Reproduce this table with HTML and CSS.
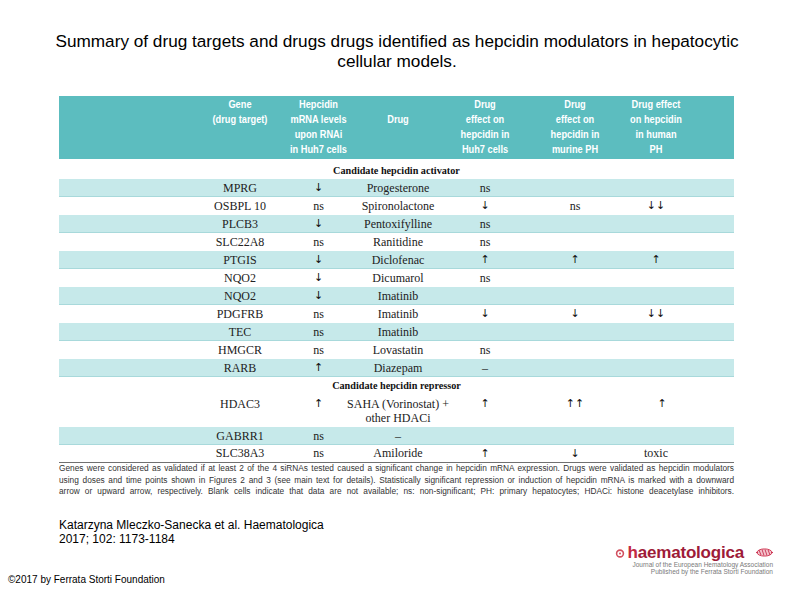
FILE: index.html
```html
<!DOCTYPE html>
<html lang="en">
<head>
<meta charset="utf-8">
<title>Summary of drug targets</title>
<link rel="stylesheet" href="styles.css">
</head>
<body>
<h1 class="title">Summary of drug targets and drugs drugs identified as hepcidin modulators in hepatocytic<br>cellular models.</h1>

<div class="figure">
  <div class="thead">
    <div class="th">Gene<br>(drug target)</div>
    <div class="th">Hepcidin<br>mRNA levels<br>upon RNAi<br>in Huh7 cells</div>
    <div class="th mid">Drug</div>
    <div class="th">Drug<br>effect on<br>hepcidin in<br>Huh7 cells</div>
    <div class="th">Drug<br>effect on<br>hepcidin in<br>murine PH</div>
    <div class="th">Drug effect<br>on hepcidin<br>in human<br>PH</div>
  </div>

  <div class="section s1">Candidate hepcidin activator</div>

  <div class="row alt"><span>MPRG</span><span class="ar">↓</span><span>Progesterone</span><span>ns</span><span></span><span></span></div>
  <div class="row"><span>OSBPL 10</span><span>ns</span><span>Spironolactone</span><span class="ar">↓</span><span>ns</span><span class="ar">↓↓</span></div>
  <div class="row alt"><span>PLCB3</span><span class="ar">↓</span><span>Pentoxifylline</span><span>ns</span><span></span><span></span></div>
  <div class="row"><span>SLC22A8</span><span>ns</span><span>Ranitidine</span><span>ns</span><span></span><span></span></div>
  <div class="row alt"><span>PTGIS</span><span class="ar">↓</span><span>Diclofenac</span><span class="ar">↑</span><span class="ar">↑</span><span class="ar">↑</span></div>
  <div class="row"><span>NQO2</span><span class="ar">↓</span><span>Dicumarol</span><span>ns</span><span></span><span></span></div>
  <div class="row alt"><span>NQO2</span><span class="ar">↓</span><span>Imatinib</span><span></span><span></span><span></span></div>
  <div class="row"><span>PDGFRB</span><span>ns</span><span>Imatinib</span><span class="ar">↓</span><span class="ar">↓</span><span class="ar">↓↓</span></div>
  <div class="row alt"><span>TEC</span><span>ns</span><span>Imatinib</span><span></span><span></span><span></span></div>
  <div class="row"><span>HMGCR</span><span>ns</span><span>Lovastatin</span><span>ns</span><span></span><span></span></div>
  <div class="row alt"><span>RARB</span><span class="ar">↑</span><span>Diazepam</span><span>–</span><span></span><span></span></div>

  <div class="section s2">Candidate hepcidin repressor</div>

  <div class="row tall"><span>HDAC3</span><span class="ar">↑</span><span class="two">SAHA (Vorinostat) +<br>other HDACi</span><span class="ar">↑</span><span class="ar">↑↑</span><span class="ar hum">↑</span></div>
  <div class="row alt"><span>GABRR1</span><span>ns</span><span>–</span><span></span><span></span><span></span></div>
  <div class="row last"><span>SLC38A3</span><span>ns</span><span>Amiloride</span><span class="ar">↑</span><span class="ar">↓</span><span>toxic</span></div>

  <div class="note">
    <span>Genes were considered as validated if at least 2 of the 4 siRNAs tested caused a significant change in hepcidin mRNA expression.  Drugs were validated as hepcidin modulators</span>
    <span>using doses and time points shown in Figures 2 and 3 (see main text for details). Statistically significant repression or induction of hepcidin mRNA is marked with a downward</span>
    <span>arrow  or upward arrow, respectively. Blank cells indicate that data are not available; ns: non-significant;  PH: primary hepatocytes; HDACi: histone deacetylase inhibitors.</span>
  </div>
</div>

<div class="footer">
  <div class="left">
    <p class="cite">Katarzyna Mleczko-Sanecka et al. Haematologica<br>2017; 102: 1173-1184</p>
    <p class="copy">©2017 by Ferrata Storti Foundation</p>
  </div>
  <div class="logo">
    <div class="logo-top">
      <svg class="mark" width="10" height="10" viewBox="0 0 10 10" aria-hidden="true">
        <circle cx="5" cy="5.5" r="3.4" fill="none" stroke="#d2505f" stroke-width="1.6"/>
        <circle cx="5" cy="5.5" r="1" fill="#d2505f"/>
      </svg>
      <span class="word"><span class="h">h</span>aematologica</span>
      <svg class="eha" width="17" height="9" viewBox="0 0 17 9" aria-hidden="true">
        <ellipse cx="8.5" cy="4.5" rx="7.5" ry="3.6" fill="#f3c3cc" stroke="#d2405a" stroke-width="1"/>
        <path d="M3 2 L5 7 M6 1.5 L8 7.5 M9 1.5 L11 7.5 M12 1.8 L14 7" stroke="#c83050" stroke-width="0.9"/>
        <path d="M0 4.5 H2 M15 4.5 H17" stroke="#c83050" stroke-width="0.9"/>
      </svg>
    </div>
    <div class="sub">Journal of the European Hematology Association</div>
    <div class="sub">Published by the Ferrata Storti Foundation</div>
  </div>
</div>
</body>
</html>
```

FILE: styles.css
```css
* { box-sizing: border-box; }

html, body {
  margin: 0;
  padding: 0;
}

body {
  width: 794px;
  height: 595px;
  overflow: hidden;
  background: #ffffff;
  color: #000000;
  font-family: "Liberation Sans", Arial, sans-serif;
}

.title {
  margin: 0;
  padding-top: 32px;
  font-size: 17.2px;
  font-weight: normal;
  line-height: 19.5px;
  text-align: center;
}

.figure {
  margin: 25px 0 0 59px;
  width: 675px;
}

.thead {
  display: grid;
  grid-template-columns: 78px 79px 80px 94px 86px 76px;
  padding-left: 142px;
  padding-top: 1px;
  height: 63px;
  background: #5cbdbf;
  color: #ffffff;
  font-family: "Liberation Sans", Arial, sans-serif;
  font-weight: bold;
  font-size: 11px;
  line-height: 15px;
}

.th {
  display: flex;
  flex-direction: column;
  align-items: center;
  text-align: center;
  white-space: nowrap;
  transform: scaleX(0.84);
}

.th.mid { padding-top: 15px; }

.section {
  text-align: center;
  font-family: "Liberation Serif", serif;
  font-weight: bold;
  font-size: 10.2px;
  color: #111;
}

.section.s1 {
  height: 20px;
  padding-top: 4px;
  line-height: 16px;
}

.section.s2 {
  height: 17px;
  line-height: 17px;
}

.row {
  display: grid;
  grid-template-columns: 78px 79px 80px 94px 86px 76px;
  padding-left: 142px;
  height: 18px;
  line-height: 18px;
  font-family: "Liberation Serif", serif;
  font-size: 12px;
  color: #222;
}

.row > span {
  display: flex;
  flex-direction: column;
  align-items: center;
  text-align: center;
  white-space: nowrap;
}

.row .ar {
  font-family: "DejaVu Sans", sans-serif;
  font-size: 11px;
  color: #111;
}

.row.alt {
  background: #c6e9ea;
  box-shadow: inset 0 -1px 0 #a8d9db;
}

.row.tall {
  height: 33px;
  padding-top: 3px;
  line-height: 14px;
}

.row .hum { padding-left: 12px; }

.row.last {
  border-bottom: 1px solid #707070;
  line-height: 17px;
}

.note {
  font-size: 8.3px;
  line-height: 11.5px;
  color: #333;
}

.note span {
  display: block;
  text-align: justify;
  text-align-last: justify;
}

.footer {
  display: flex;
  justify-content: space-between;
  margin-top: 20px;
}

.left {
  display: flex;
  flex-direction: column;
}

.cite {
  margin: 0 0 0 59px;
  font-size: 12px;
  line-height: 14px;
}

.copy {
  margin: 28px 0 0 8px;
  font-size: 10px;
  line-height: 12px;
}

.logo {
  display: flex;
  flex-direction: column;
  align-items: flex-end;
  margin: 26px 21px 0 0;
}

.logo-top {
  display: flex;
  align-items: center;
  height: 17px;
}

.mark { margin-right: 3px; margin-top: 2px; }

.word {
  font-family: "Liberation Sans", Arial, sans-serif;
  font-weight: bold;
  font-size: 17px;
  line-height: 17px;
  letter-spacing: -0.2px;
  color: #9e1b38;
}

.word .h { color: #c22a43; }

.eha { margin-left: 12px; }

.sub {
  font-size: 6.5px;
  line-height: 7px;
  color: #7a7a7a;
  white-space: nowrap;
}
```
